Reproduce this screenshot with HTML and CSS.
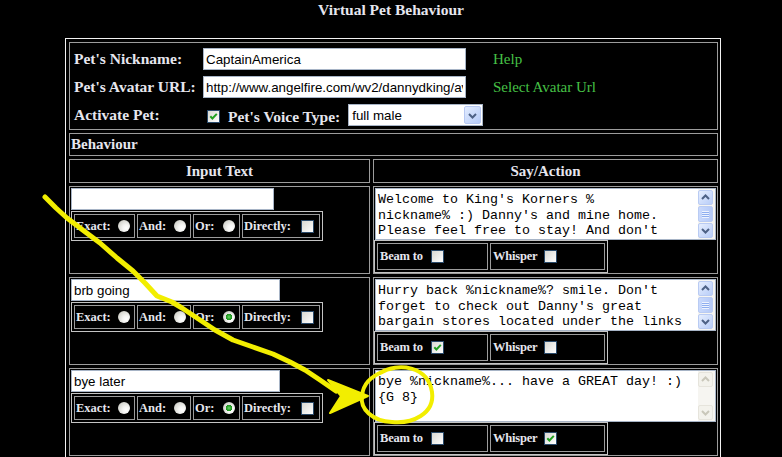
FILE: index.html
```html
<!DOCTYPE html>
<html>
<head>
<meta charset="utf-8">
<title>Virtual Pet Behaviour</title>
<link rel="stylesheet" href="styles.css">
</head>
<body>
<div class="page">
  <h1 class="title">Virtual Pet Behaviour</h1>
  <div class="outer">
    <div class="cell span2 settings">
      <div class="lbl">Pet's Nickname:</div>
      <input class="txt w263" type="text" value="CaptainAmerica">
      <a class="link">Help</a>
      <div class="lbl">Pet's Avatar URL:</div>
      <input class="txt w263" type="text" value="http://www.angelfire.com/wv2/dannydking/avatar.gif">
      <a class="link">Select Avatar Url</a>
      <div class="lbl">Activate Pet:</div>
      <div class="voice">
        <span class="cb on"><svg viewBox="0 0 11 11" width="11" height="11"><path d="M2.3 5.3 L4.4 7.5 L8.8 2.9" fill="none" stroke="#21a121" stroke-width="2"/></svg></span>
        <span class="lbl vlbl">Pet's Voice Type:</span>
        <div class="select">
          <span>full male</span>
          <span class="dd"><svg viewBox="0 0 15 17" width="15" height="17"><path d="M4 7 L7.5 10.5 L11 7" fill="none" stroke="#4d6185" stroke-width="2"/></svg></span>
        </div>
      </div>
    </div>

    <div class="cell span2 behav">Behaviour</div>

    <div class="cell head">Input Text</div>
    <div class="cell head">Say/Action</div>

    <!-- row A -->
    <div class="cell in">
      <input class="txt wa" type="text" value="">
      <div class="opts">
        <div class="opt o-exact">Exact:<span class="radio"></span></div>
        <div class="opt o-and">And:<span class="radio"></span></div>
        <div class="opt o-or">Or:<span class="radio"></span></div>
        <div class="opt o-dir">Directly:<span class="cb"></span></div>
      </div>
    </div>
    <div class="cell say">
      <div class="ta">
        <div class="ta-text">Welcome to King's Korners %<br>nickname% :) Danny's and mine home.<br>Please feel free to stay! And don't</div>
        <div class="sb">
          <span class="sbb"><svg viewBox="0 0 13 13" width="13" height="13"><path d="M3 8 L6.5 4.5 L10 8" fill="none" stroke="#4d6185" stroke-width="2"/></svg></span>
          <span class="thumb"><span class="grip"></span></span>
          <span class="sbb"><svg viewBox="0 0 13 13" width="13" height="13"><path d="M3 5 L6.5 8.5 L10 5" fill="none" stroke="#4d6185" stroke-width="2"/></svg></span>
        </div>
      </div>
      <div class="beam">
        <div class="bopt b-beam"><span class="bl">Beam to</span><span class="cb"></span></div>
        <div class="bopt b-wh"><span class="bl">Whisper</span><span class="cb"></span></div>
      </div>
    </div>

    <!-- row B -->
    <div class="cell in">
      <input class="txt wb" type="text" value="brb going">
      <div class="opts">
        <div class="opt o-exact">Exact:<span class="radio"></span></div>
        <div class="opt o-and">And:<span class="radio"></span></div>
        <div class="opt o-or">Or:<span class="radio on"></span></div>
        <div class="opt o-dir">Directly:<span class="cb"></span></div>
      </div>
    </div>
    <div class="cell say">
      <div class="ta">
        <div class="ta-text">Hurry back %nickname%? smile. Don't<br>forget to check out Danny's great<br>bargain stores located under the links</div>
        <div class="sb">
          <span class="sbb"><svg viewBox="0 0 13 13" width="13" height="13"><path d="M3 8 L6.5 4.5 L10 8" fill="none" stroke="#4d6185" stroke-width="2"/></svg></span>
          <span class="thumb"><span class="grip"></span></span>
          <span class="sbb"><svg viewBox="0 0 13 13" width="13" height="13"><path d="M3 5 L6.5 8.5 L10 5" fill="none" stroke="#4d6185" stroke-width="2"/></svg></span>
        </div>
      </div>
      <div class="beam">
        <div class="bopt b-beam"><span class="bl">Beam to</span><span class="cb on"><svg viewBox="0 0 11 11" width="11" height="11"><path d="M2.3 5.3 L4.4 7.5 L8.8 2.9" fill="none" stroke="#21a121" stroke-width="2"/></svg></span></div>
        <div class="bopt b-wh"><span class="bl">Whisper</span><span class="cb"></span></div>
      </div>
    </div>

    <!-- row C -->
    <div class="cell in">
      <input class="txt wb" type="text" value="bye later">
      <div class="opts">
        <div class="opt o-exact">Exact:<span class="radio"></span></div>
        <div class="opt o-and">And:<span class="radio"></span></div>
        <div class="opt o-or">Or:<span class="radio on"></span></div>
        <div class="opt o-dir">Directly:<span class="cb"></span></div>
      </div>
    </div>
    <div class="cell say">
      <div class="ta">
        <div class="ta-text">bye %nickname%... have a GREAT day! :)<br>{G 8}</div>
        <div class="sb off">
          <span class="sbb"><svg viewBox="0 0 13 13" width="13" height="13"><path d="M3 8 L6.5 4.5 L10 8" fill="none" stroke="#c9c7ba" stroke-width="2"/></svg></span>
          <span class="track"></span>
          <span class="sbb"><svg viewBox="0 0 13 13" width="13" height="13"><path d="M3 5 L6.5 8.5 L10 5" fill="none" stroke="#c9c7ba" stroke-width="2"/></svg></span>
        </div>
      </div>
      <div class="beam">
        <div class="bopt b-beam"><span class="bl">Beam to</span><span class="cb"></span></div>
        <div class="bopt b-wh"><span class="bl">Whisper</span><span class="cb on"><svg viewBox="0 0 11 11" width="11" height="11"><path d="M2.3 5.3 L4.4 7.5 L8.8 2.9" fill="none" stroke="#21a121" stroke-width="2"/></svg></span></div>
      </div>
    </div>
  </div>

  <svg class="scribble" viewBox="0 0 782 457" width="782" height="457">
    <path d="M45 197 L56 208 L67 218 L84 231 L100 243 L117 258 L133 271 L145 283 L157 296 L172 302 L182 308 L197 318 L215 330 L233 340 L253 347 L273 354 L290 362 L305 370 L320 380 L336 391" fill="none" stroke="#f2ee00" stroke-width="5" stroke-linejoin="round" stroke-linecap="round"/>
    <path d="M328 380 L368 396 L330 413 L341 396 Z" fill="#f2ee00" stroke="#f2ee00" stroke-width="2" stroke-linejoin="round"/>
    <path d="M380 373 C398 362 428 366 432 392 C435 414 412 424 392 422 C372 421 360 409 362 396 C363 384 370 377 384 371" fill="none" stroke="#f2ee00" stroke-width="4" stroke-linecap="round"/>
  </svg>
</div>
</body>
</html>
```

FILE: styles.css
```css
html, body {
  margin: 0;
  padding: 0;
  background: #000;
  overflow: hidden;
}

body {
  font-family: "Liberation Serif", "Times New Roman", serif;
  color: #e6e6ee;
}

.page {
  position: relative;
  width: 782px;
  height: 457px;
  overflow: hidden;
}

.title {
  margin: 0;
  height: 38px;
  box-sizing: border-box;
  padding-top: 1px;
  text-align: center;
  font-size: 15.5px;
  line-height: 18px;
  font-weight: bold;
}

.outer {
  margin-left: 65px;
  width: 656px;
  box-sizing: border-box;
  border: 1px solid #f2f2f2;
  padding: 3px 2px 3px 3px;
  display: grid;
  grid-template-columns: 301px 345px;
  gap: 3px;
}

.cell {
  border: 1px solid #9c9c9c;
  box-sizing: border-box;
}

.span2 {
  grid-column: 1 / 3;
}

/* settings block */
.settings {
  height: 88px;
  padding: 5px 0 0 4px;
  display: grid;
  grid-template-columns: 129px 263px auto;
  grid-template-rows: 22px 22px 22px;
  row-gap: 6px;
  align-items: center;
}

.lbl {
  font-weight: bold;
  font-size: 15.5px;
  white-space: nowrap;
}

.txt {
  box-sizing: border-box;
  height: 22px;
  margin: 0;
  border: 1px solid #a7b4c6;
  padding: 0 2px;
  background: #fff;
  color: #000;
  font: 13.33px "Liberation Sans", Arial, sans-serif;
  outline: none;
}

.w263 { width: 263px; }
.wa { width: 203px; }
.wb { width: 209px; }

.link {
  margin-left: 27px;
  color: #46c046;
  font-size: 15px;
  text-decoration: none;
  white-space: nowrap;
}

.voice {
  grid-column: 2 / 4;
  display: flex;
  align-items: center;
}

.voice .cb {
  margin: 3px 0 0 4px;
}

.vlbl {
  margin: 4px 0 0 8px;
}

.select {
  margin-left: 8px;
  width: 135px;
  height: 22px;
  box-sizing: border-box;
  border: 1px solid #a7b4c6;
  background: #fff;
  color: #000;
  font: 13.33px "Liberation Sans", Arial, sans-serif;
  display: flex;
  align-items: center;
  justify-content: space-between;
  padding: 1px 1px 1px 3px;
}

.dd {
  width: 17px;
  height: 18px;
  box-sizing: border-box;
  border: 1px solid #b7c8f2;
  border-radius: 2px;
  background: linear-gradient(135deg, #e3ecfe, #b5cbf8);
  display: flex;
  align-items: center;
  justify-content: center;
}

/* behaviour */
.behav {
  height: 23px;
  padding-left: 1px;
  display: flex;
  align-items: center;
  font-weight: bold;
  font-size: 15px;
}

.head {
  height: 24px;
  display: flex;
  align-items: center;
  justify-content: center;
  font-weight: bold;
  font-size: 15px;
}

.in {
  height: 88px;
  padding: 1px;
  display: flex;
  flex-direction: column;
  align-items: flex-start;
  gap: 1px;
}

.opts {
  display: flex;
  gap: 2px;
  padding: 2px;
  border: 1px solid #c4c4c4;
}

.opt {
  height: 24px;
  box-sizing: border-box;
  border: 1px solid #9c9c9c;
  display: flex;
  align-items: center;
  padding: 0 4px 0 1px;
  font-weight: bold;
  font-size: 12.5px;
  white-space: nowrap;
}

.opt .radio,
.opt .cb {
  margin-left: auto;
}

.o-exact { width: 61px; }
.o-and { width: 54px; }
.o-or { width: 47px; }
.o-dir { width: 78px; padding-right: 5px; }

.radio {
  display: inline-block;
  width: 12px;
  height: 12px;
  box-sizing: border-box;
  border-radius: 50%;
  background: radial-gradient(circle at 68% 68%, #ffffff 0, #f4f4f2 30%, #d6d6d0 70%, #a9a9a2 100%);
}

.radio.on {
  background:
    radial-gradient(circle at 50% 50%, #6fd46f 0, #2aa82a 2px, #1e8e1e 3px, transparent 3.5px),
    radial-gradient(circle at 68% 68%, #ffffff 0, #f4f4f2 30%, #d6d6d0 70%, #a9a9a2 100%);
}

.cb {
  display: inline-flex;
  align-items: center;
  justify-content: center;
  width: 13px;
  height: 13px;
  box-sizing: border-box;
  border: 1px solid #2a4a6a;
  background: linear-gradient(135deg, #d8d8d2, #ffffff);
  flex: none;
}

/* say/action */
.say {
  height: 88px;
  padding: 1px 1px 0 1px;
  display: flex;
  flex-direction: column;
  align-items: flex-start;
}

.ta {
  width: 341px;
  height: 52px;
  box-sizing: border-box;
  border: 1px solid #a7b4c6;
  background: #fff;
  display: flex;
}

.ta-text {
  flex: 1;
  padding: 3px 0 0 2px;
  overflow: hidden;
  white-space: nowrap;
  color: #000;
  font: 13.33px/15.6px "Liberation Mono", "Courier New", monospace;
}

.sb {
  width: 17px;
  box-sizing: border-box;
  padding: 1px 2px 1px 0;
  display: flex;
  flex-direction: column;
  gap: 1px;
  background: #f6f5f1;
}

.sbb {
  height: 15px;
  box-sizing: border-box;
  border: 1px solid #b9cbf3;
  border-radius: 2px;
  background: linear-gradient(135deg, #e6eefe, #b8cdf8);
  display: flex;
  align-items: center;
  justify-content: center;
}

.thumb {
  flex: 1;
  box-sizing: border-box;
  border: 1px solid #b9cbf3;
  border-radius: 2px;
  background: linear-gradient(90deg, #c9d9fc, #b4c9f7);
  display: flex;
  align-items: center;
  justify-content: center;
}

.grip {
  width: 7px;
  height: 7px;
  background: repeating-linear-gradient(180deg, #eef3fe 0, #eef3fe 1px, #8eaef0 1px, #8eaef0 2px);
}

.sb.off .sbb {
  border-color: #e6e4dc;
  background: #f3f2ec;
}

.track {
  flex: 1;
}

.beam {
  display: flex;
  gap: 2px;
  padding: 2px;
  border: 1px solid #c4c4c4;
  margin-left: -1px;
}

.bopt {
  height: 27px;
  box-sizing: border-box;
  border: 1px solid #9c9c9c;
  display: flex;
  align-items: center;
  padding-left: 2px;
  font-weight: bold;
  font-size: 12.5px;
  white-space: nowrap;
}

.b-beam { width: 111px; }
.b-wh { width: 115px; }

.bl {
  flex: none;
  letter-spacing: -0.2px;
}

.b-beam .bl { margin-right: 8px; }
.b-wh .bl { margin-right: 7px; }

/* hand drawn annotation */
.scribble {
  position: absolute;
  left: 0;
  top: 0;
  pointer-events: none;
}
```
